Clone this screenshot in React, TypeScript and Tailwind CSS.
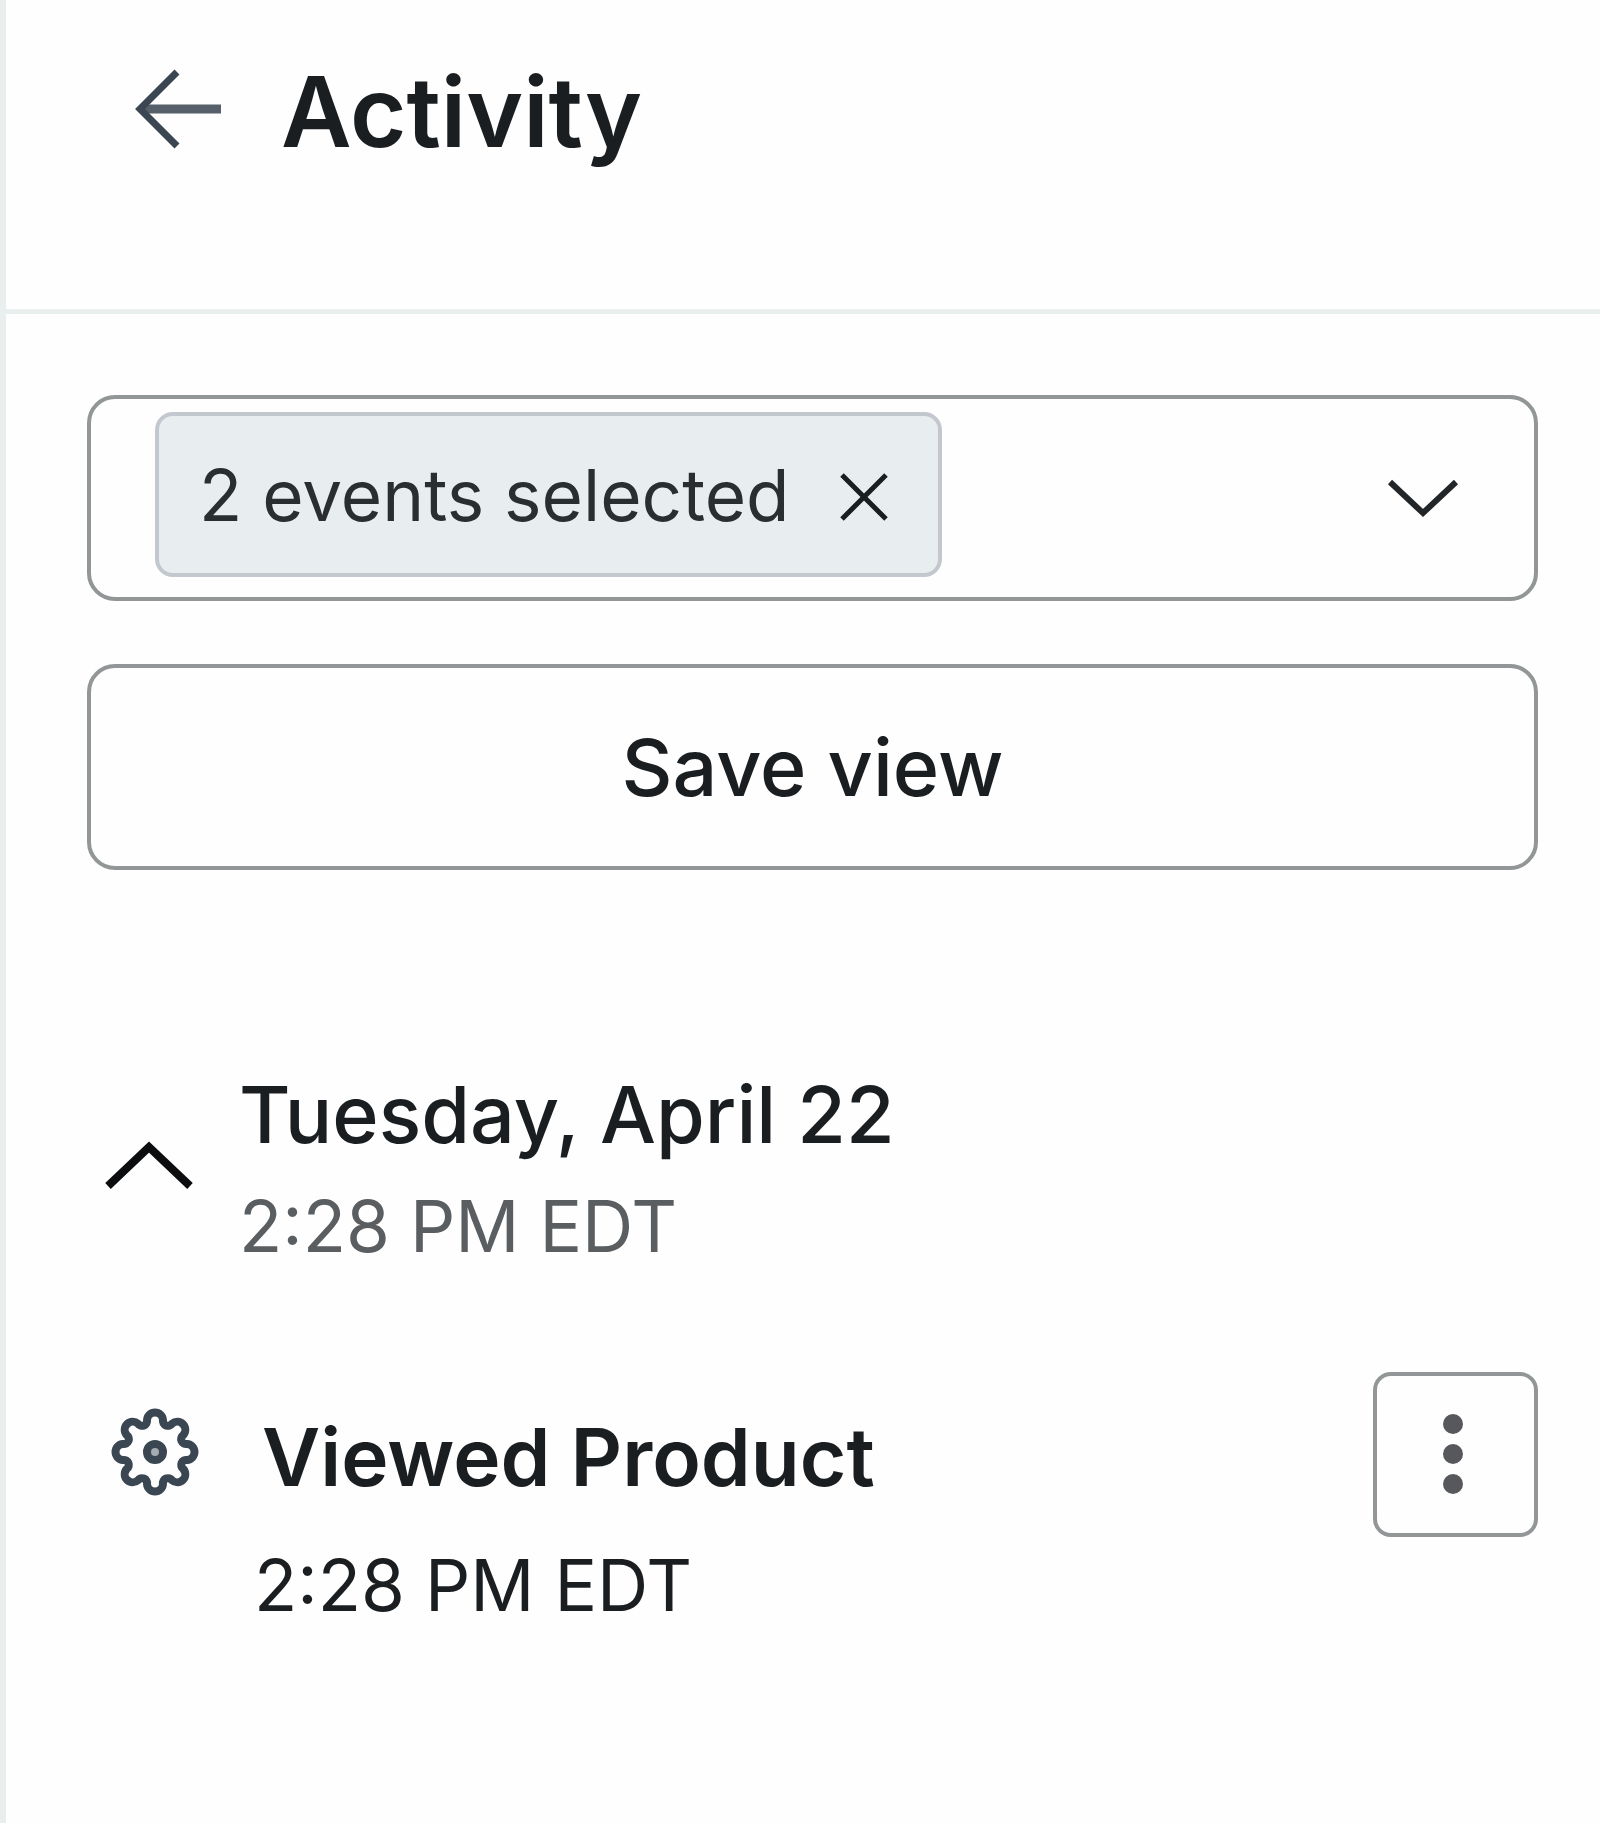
import React, { useState } from "react";

/** Outline of a cog with eight rounded teeth, centred on the origin. */
function cogOutline(): string {
  const at = (deg: number, r: number) => {
    const a = (deg * Math.PI) / 180;
    return `${(r * Math.sin(a)).toFixed(2)} ${(-r * Math.cos(a)).toFixed(2)}`;
  };
  let d = `M${at(-14, 33)}`;
  for (let i = 0; i < 8; i++) {
    const mid = i * 45;
    d += `A8 8 0 0 1 ${at(mid + 14, 33)}`;
    d += `A5 5 0 0 0 ${at(mid + 31, 33)}`;
  }
  return d + "Z";
}

function ArrowLeftIcon() {
  return (
    <svg className="h-[90px] w-[96px]" viewBox="0 0 96 90" fill="none" aria-hidden="true">
      <path d="M12 42H91" stroke="#56606b" strokeWidth="9" />
      <path d="M47 5L10 42L47 79" stroke="#3a4651" strokeWidth="7" />
    </svg>
  );
}

function CloseIcon() {
  return (
    <svg className="size-[52px]" viewBox="0 0 52 52" fill="none" stroke="#1b1e21" strokeWidth="5" aria-hidden="true">
      <path d="M4 6L48 50M48 6L4 50" />
    </svg>
  );
}

function ChevronDownIcon() {
  return (
    <svg className="h-[40px] w-[72px]" viewBox="0 0 72 40" fill="none" stroke="#232629" strokeWidth="6" aria-hidden="true">
      <path d="M3 4L36 35L69 4" />
    </svg>
  );
}

function ChevronUpIcon() {
  return (
    <svg className="h-[60px] w-[88px]" viewBox="0 0 88 60" fill="none" stroke="#0c0d0e" strokeWidth="8" aria-hidden="true">
      <path d="M3 46L44 7L85 46" />
    </svg>
  );
}

function CogIcon() {
  return (
    <svg className="size-[90px]" viewBox="-45 -45 90 90" fill="none" stroke="#3a4651" aria-hidden="true">
      <path d={cogOutline()} strokeWidth="8" strokeLinejoin="round" />
      <circle r="8" fill="#a5abb1" strokeWidth="8" />
    </svg>
  );
}

function KebabIcon() {
  return (
    <svg className="h-[84px] w-[28px]" viewBox="0 0 28 84" fill="#56585b" aria-hidden="true">
      <circle cx="11" cy="11" r="10" />
      <circle cx="11" cy="41" r="10" />
      <circle cx="11" cy="71" r="10" />
    </svg>
  );
}

export default function App() {
  const [open, setOpen] = useState(true);
  const [filtered, setFiltered] = useState(true);

  return (
    <div className="min-h-screen border-l-[6px] border-[#e9eeee] bg-[#fefefe] font-['Inter',sans-serif] text-[#1b1e21]">
      <header className="flex items-center gap-[55px] border-b-[5px] border-[#e9eeee] pt-[52px] pb-[137px] pl-[124px]">
        <button type="button" aria-label="Back">
          <ArrowLeftIcon />
        </button>
        <h1 className="text-[97px] leading-[120px] font-semibold">Activity</h1>
      </header>

      <main className="pt-[81px] pr-[62px] pb-20 pl-[81px]">
        <div className="flex h-[206px] items-start justify-between rounded-[28px] border-4 border-[#929696] pt-[13px] pr-[75px] pl-16">
          {filtered ? (
            <div className="flex h-[165px] items-center gap-12 rounded-[18px] border-4 border-[#c3c8cf] bg-[#e8edf0] pr-12 pl-10 text-[71px] leading-[112px] text-[#2b2e31]">
              <span>2 events selected</span>
              <button type="button" aria-label="Clear selected events" onClick={() => setFiltered(false)}>
                <CloseIcon />
              </button>
            </div>
          ) : (
            <span />
          )}
          <button type="button" aria-label="Choose events" className="flex h-[172px] items-center">
            <ChevronDownIcon />
          </button>
        </div>

        <button
          type="button"
          className="mt-[63px] flex h-[206px] w-full items-center justify-center rounded-[28px] border-4 border-[#929696] text-[79px] leading-[112px] font-medium"
        >
          Save view
        </button>

        <section className="mt-[188px]">
          <button
            type="button"
            aria-expanded={open}
            onClick={() => setOpen(!open)}
            className="flex items-center gap-[46px] pl-[18px] text-left"
          >
            <ChevronUpIcon />
            <span>
              <span className="block text-[79px] leading-[112px] font-medium">Tuesday, April 22</span>
              <span className="block text-[71px] leading-[112px] text-[#5b5e61]">2:28 PM EDT</span>
            </span>
          </button>

          {open && (
            <article className="mt-[90px] flex items-start pl-[23px]">
              <div className="flex h-[160px] items-center">
                <CogIcon />
              </div>
              <div className="flex-1 pt-[29px] pl-[54px]">
                <h2 className="pl-2 text-[80px] leading-[112px] font-semibold">Viewed Product</h2>
                <p className="mt-4 text-[71px] leading-[112px]">2:28 PM EDT</p>
              </div>
              <button
                type="button"
                aria-label="More actions"
                className="flex size-[165px] items-center justify-center rounded-[18px] border-4 border-[#929696]"
              >
                <KebabIcon />
              </button>
            </article>
          )}
        </section>
      </main>
    </div>
  );
}
